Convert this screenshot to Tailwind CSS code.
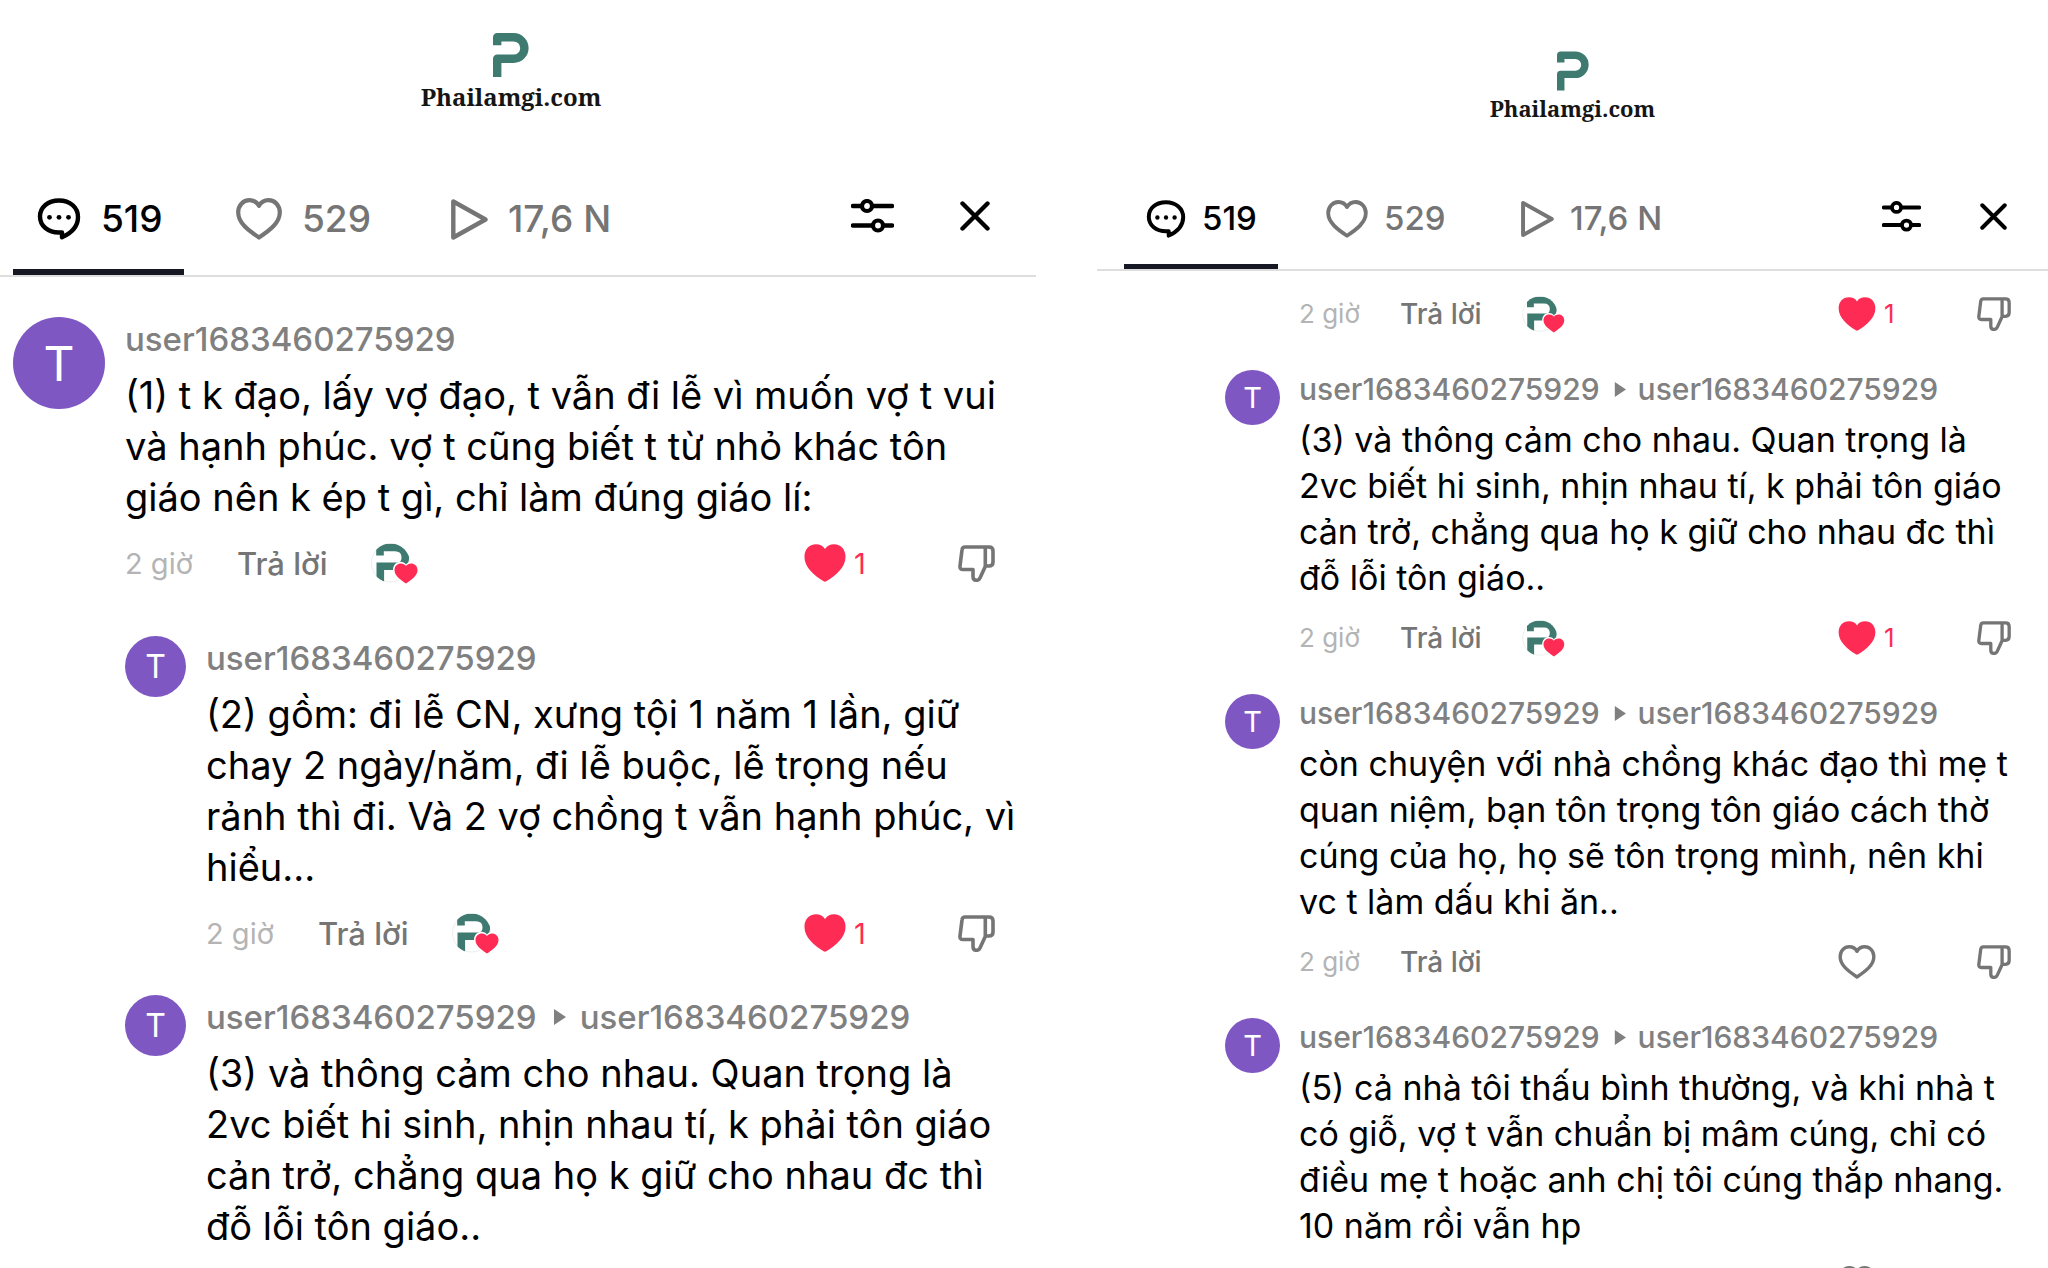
<!DOCTYPE html>
<html lang="vi">
<head>
  <meta charset="UTF-8" />
  <meta name="viewport" content="width=device-width, initial-scale=1.0" />
  <title>Phailamgi.com - Bình luận</title>
  <script src="https://cdn.jsdelivr.net/npm/@tailwindcss/browser@4"></script>
</head>
<body class="bg-white text-black font-[family-name:Inter,sans-serif] font-medium h-screen overflow-hidden">

  <!-- Icons -->
  <svg class="absolute size-0" aria-hidden="true">
    <symbol id="logo" viewBox="0 0 36 44">
      <path d="M4.2 12.3V4.2H20.6A10.8 10.8 0 0 1 20.6 25.8H4.2V44" fill="none" stroke="#3f7a70" stroke-width="8.4" stroke-linejoin="round" />
    </symbol>
    <symbol id="comment" viewBox="0 0 44 42">
      <path d="M25 34.5H22C11 34.5 3 28 3 18.5S11 2.5 22 2.5S41 9.5 41 19C41 28 34.5 35 25 39.3Z" fill="none" stroke="currentColor" stroke-width="4.4" stroke-linejoin="round" />
      <circle cx="12.5" cy="19.3" r="2.4" fill="currentColor" />
      <circle cx="22" cy="19.3" r="2.4" fill="currentColor" />
      <circle cx="31.5" cy="19.3" r="2.4" fill="currentColor" />
    </symbol>
    <symbol id="heart" viewBox="0 0 46 42">
      <path d="M23 7.8C21 4.2 17.5 2.2 13.5 2.2C7 2.2 2.2 7.5 2.2 14.5C2.2 25 12.5 32.5 23 39.5C33.5 32.5 43.8 25 43.8 14.5C43.8 7.5 39 2.2 32.5 2.2C28.5 2.2 25 4.2 23 7.8Z" fill="none" stroke="currentColor" stroke-width="4.2" stroke-linejoin="round" />
    </symbol>
    <symbol id="heart-full" viewBox="0 0 46 42">
      <path d="M23 5.5C21 2 17.5 .3 13 .3C5.5 .3 .3 6 .3 14C.3 26 11 34.5 21.5 41.2Q23 42 24.5 41.2C35 34.5 45.7 26 45.7 14C45.7 6 40.5 .3 33 .3C28.5 .3 25 2 23 5.5Z" fill="currentColor" />
    </symbol>
    <symbol id="play" viewBox="0 0 37 41">
      <path d="M2.3 2.5V38.5L34.5 20.5Z" fill="none" stroke="currentColor" stroke-width="4.4" stroke-linejoin="round" />
    </symbol>
    <symbol id="filter" viewBox="0 0 43 34">
      <path d="M2 7H10M22 7H41M2 26.5H21M33 26.5H41" fill="none" stroke="currentColor" stroke-width="4.4" stroke-linecap="round" />
      <circle cx="16" cy="7" r="5" fill="none" stroke="currentColor" stroke-width="4.2" />
      <circle cx="27" cy="26.5" r="5" fill="none" stroke="currentColor" stroke-width="4.2" />
    </symbol>
    <symbol id="close" viewBox="0 0 30 30">
      <path d="M2.5 2.5L27.5 27.5M27.5 2.5L2.5 27.5" fill="none" stroke="currentColor" stroke-width="4.4" stroke-linecap="round" />
    </symbol>
    <symbol id="dislike" viewBox="0 0 37 37">
      <path d="M7 2H31Q35 2 35 6V17Q35 21 31 21H27.5L22 33Q21 35.3 18.5 35.3Q15 35.3 15 31.5V24.5H5Q1.6 24.5 2 21L4 5Q4.3 2 7 2ZM27.3 2V21" fill="none" stroke="currentColor" stroke-width="3.6" stroke-linejoin="round" />
    </symbol>
    <clipPath id="round"><circle cx="19.5" cy="20" r="19.5" /></clipPath>
    <symbol id="liked-by" viewBox="0 0 47 41">
      <circle cx="19.5" cy="20" r="19" fill="#fff" stroke="#e8eeed" stroke-width="1" />
      <path d="M9 12.5V4.5H24C31 4.5 34.3 9 34.3 14.5C34.3 20 31 23.3 26 23.3H9.3V41" fill="none" stroke="#3f7a70" stroke-width="7.6" clip-path="url(#round)" />
      <path d="M35 21.5C31.5 16.5 22 18.5 22 27C22 33.5 30 38 35 41.5C40 38 48 33.5 48 27C48 18.5 38.5 16.5 35 21.5Z" fill="#fff" />
      <path d="M35 23C32 18.5 23.5 20 23.5 27C23.5 33 30 37 35 40.5C40 37 46.5 33 46.5 27C46.5 20 38 18.5 35 23Z" fill="#fe2c55" />
    </symbol>
    <symbol id="arrow" viewBox="0 0 15 16">
      <path d="M3 0L15 8L3 16Z" fill="currentColor" />
    </symbol>
  </svg>

  <main class="grid grid-cols-[minmax(0,1036fr)_minmax(0,951fr)] gap-[61px]">

    <!-- Left screen -->
    <section>
      <header class="border-b-2 border-[#dedede] pt-[33px]">
        <a href="#" class="flex flex-col items-center gap-1 pr-[14px] text-[#151515]">
          <svg class="w-9 h-11"><use href="#logo" /></svg>
          <span class="font-[family-name:Noto_Serif,Liberation_Serif,serif] font-bold text-[24px] leading-8">Phailamgi.com</span>
        </a>
        <nav class="mt-[50px] h-[112px] pl-[13px] pr-[46px] flex items-center text-[37px] text-[#757575]">
          <button class="h-full w-[171px] px-6 pt-[6px] flex items-center gap-5 border-b-6 border-[#161823] text-black">
            <svg class="w-11 h-[42px] shrink-0"><use href="#comment" /></svg>519
          </button>
          <button class="h-full w-[215px] ml-7 px-6 flex items-center gap-5">
            <svg class="w-[46px] h-[42px] shrink-0"><use href="#heart" /></svg>529
          </button>
          <button class="h-full flex items-center gap-5 px-6 whitespace-nowrap">
            <svg class="w-[37px] h-[41px] shrink-0"><use href="#play" /></svg>17,6 N
          </button>
          <div class="ml-auto flex items-center gap-[66px] pb-[6px] text-black">
            <button aria-label="Lọc"><svg class="w-[43px] h-[34px]"><use href="#filter" /></svg></button>
            <button aria-label="Đóng"><svg class="w-[30px] h-[30px]"><use href="#close" /></svg></button>
          </div>
        </nav>
      </header>

      <div class="pt-10 pl-[13px] pr-[41px] text-[38px] leading-[51px] whitespace-nowrap">
        <article class="flex gap-5 mb-[53px]">
          <div class="size-[92px] shrink-0 rounded-full bg-[#7e57c2] text-white text-[48px] font-normal flex items-center justify-center">T</div>
          <div class="flex-1 min-w-0 pt-[2px]">
            <a href="#" class="block text-[33px] leading-10 text-[#808080]">user1683460275929</a>
            <p class="mt-[11px] font-normal">(1) t k đạo, lấy vợ đạo, t vẫn đi lễ vì muốn vợ t vui<br>và hạnh phúc. vợ t cũng biết t từ nhỏ khác tôn<br>giáo nên k ép t gì, chỉ làm đúng giáo lí:</p>
            <div class="mt-5 h-10 flex items-center gap-11 text-[29px] text-[#757575]">
              <span class="font-normal text-[#b4b4b4]">2 giờ</span>
              <button class="text-[31px]">Trả lời</button>
              <svg class="w-[47px] h-[41px]"><use href="#liked-by" /></svg>
              <div class="ml-auto w-[191px] flex items-center justify-between">
                <button class="flex items-center gap-2 text-[#fe2c55] font-normal"><svg class="w-[42px] h-[38px]"><use href="#heart-full" /></svg>1</button>
                <button aria-label="Không thích"><svg class="size-[37px]"><use href="#dislike" /></svg></button>
              </div>
            </div>
          </div>
        </article>

        <article class="flex gap-5 ml-28 mb-[42px]">
          <div class="size-[61px] shrink-0 rounded-full bg-[#7e57c2] text-white text-[32px] font-normal flex items-center justify-center">T</div>
          <div class="flex-1 min-w-0 pt-[2px]">
            <a href="#" class="block text-[33px] leading-10 text-[#808080]">user1683460275929</a>
            <p class="mt-[11px] font-normal">(2) gồm: đi lễ CN, xưng tội 1 năm 1 lần, giữ<br>chay 2 ngày/năm, đi lễ buộc, lễ trọng nếu<br>rảnh thì đi. Và 2 vợ chồng t vẫn hạnh phúc, vì<br>hiểu...</p>
            <div class="mt-5 h-10 flex items-center gap-11 text-[29px] text-[#757575]">
              <span class="font-normal text-[#b4b4b4]">2 giờ</span>
              <button class="text-[31px]">Trả lời</button>
              <svg class="w-[47px] h-[41px]"><use href="#liked-by" /></svg>
              <div class="ml-auto w-[191px] flex items-center justify-between">
                <button class="flex items-center gap-2 text-[#fe2c55] font-normal"><svg class="w-[42px] h-[38px]"><use href="#heart-full" /></svg>1</button>
                <button aria-label="Không thích"><svg class="size-[37px]"><use href="#dislike" /></svg></button>
              </div>
            </div>
          </div>
        </article>

        <article class="flex gap-5 ml-28">
          <div class="size-[61px] shrink-0 rounded-full bg-[#7e57c2] text-white text-[32px] font-normal flex items-center justify-center">T</div>
          <div class="flex-1 min-w-0 pt-[2px]">
            <div class="flex items-center gap-[14px] text-[33px] leading-10 text-[#808080]">
              <a href="#">user1683460275929</a>
              <svg class="w-[15px] h-4"><use href="#arrow" /></svg>
              <a href="#">user1683460275929</a>
            </div>
            <p class="mt-[11px] font-normal">(3) và thông cảm cho nhau. Quan trọng là<br>2vc biết hi sinh, nhịn nhau tí, k phải tôn giáo<br>cản trở, chẳng qua họ k giữ cho nhau đc thì<br>đỗ lỗi tôn giáo..</p>
          </div>
        </article>
      </div>
    </section>

    <!-- Right screen -->
    <section>
      <header class="border-b-2 border-[#dedede] pt-[51px]">
        <a href="#" class="flex flex-col items-center gap-[3px] text-[#151515]">
          <svg class="w-8 h-10"><use href="#logo" /></svg>
          <span class="font-[family-name:Noto_Serif,Liberation_Serif,serif] font-bold text-[22px] leading-7">Phailamgi.com</span>
        </a>
        <nav class="mt-[47px] h-[100px] pl-[27px] pr-[41px] flex items-center text-[33px] text-[#757575]">
          <button class="h-full w-[154px] px-[22px] pt-[5px] flex items-center gap-4 border-b-5 border-[#161823] text-black">
            <svg class="w-10 h-[38px] shrink-0"><use href="#comment" /></svg>519
          </button>
          <button class="h-full w-[195px] ml-[26px] px-[22px] flex items-center gap-4">
            <svg class="w-[42px] h-[38px] shrink-0"><use href="#heart" /></svg>529
          </button>
          <button class="h-full flex items-center gap-4 px-[22px] whitespace-nowrap">
            <svg class="w-[33px] h-[38px] shrink-0"><use href="#play" /></svg>17,6 N
          </button>
          <div class="ml-auto flex items-center gap-[59px] pb-[6px] text-black">
            <button aria-label="Lọc"><svg class="w-[39px] h-[31px]"><use href="#filter" /></svg></button>
            <button aria-label="Đóng"><svg class="w-[27px] h-[27px]"><use href="#close" /></svg></button>
          </div>
        </nav>
      </header>

      <div class="pt-[25px] pl-32 pr-[37px] text-[34px] leading-[46px] whitespace-nowrap">
        <div class="ml-[74px] mb-[38px] h-9 flex items-center gap-10 text-[26px] text-[#757575]">
          <span class="font-normal text-[#b4b4b4]">2 giờ</span>
          <button class="text-[28px]">Trả lời</button>
          <svg class="w-[43px] h-[37px]"><use href="#liked-by" /></svg>
          <div class="ml-auto w-[173px] flex items-center justify-between">
            <button class="flex items-center gap-2 text-[#fe2c55] font-normal"><svg class="w-[38px] h-[34px]"><use href="#heart-full" /></svg>1</button>
            <button aria-label="Không thích"><svg class="size-[34px]"><use href="#dislike" /></svg></button>
          </div>
        </div>

        <article class="flex gap-[19px] mb-[38px]">
          <div class="size-[55px] shrink-0 rounded-full bg-[#7e57c2] text-white text-[29px] font-normal flex items-center justify-center">T</div>
          <div class="flex-1 min-w-0 pt-px">
            <div class="flex items-center gap-3 text-[30px] leading-9 text-[#808080]">
              <a href="#">user1683460275929</a>
              <svg class="w-[14px] h-[15px]"><use href="#arrow" /></svg>
              <a href="#">user1683460275929</a>
            </div>
            <p class="mt-[10px] font-normal">(3) và thông cảm cho nhau. Quan trọng là<br>2vc biết hi sinh, nhịn nhau tí, k phải tôn giáo<br>cản trở, chẳng qua họ k giữ cho nhau đc thì<br>đỗ lỗi tôn giáo..</p>
            <div class="mt-[19px] h-9 flex items-center gap-10 text-[26px] text-[#757575]">
              <span class="font-normal text-[#b4b4b4]">2 giờ</span>
              <button class="text-[28px]">Trả lời</button>
              <svg class="w-[43px] h-[37px]"><use href="#liked-by" /></svg>
              <div class="ml-auto w-[173px] flex items-center justify-between">
                <button class="flex items-center gap-2 text-[#fe2c55] font-normal"><svg class="w-[38px] h-[34px]"><use href="#heart-full" /></svg>1</button>
                <button aria-label="Không thích"><svg class="size-[34px]"><use href="#dislike" /></svg></button>
              </div>
            </div>
          </div>
        </article>

        <article class="flex gap-[19px] mb-[38px]">
          <div class="size-[55px] shrink-0 rounded-full bg-[#7e57c2] text-white text-[29px] font-normal flex items-center justify-center">T</div>
          <div class="flex-1 min-w-0 pt-px">
            <div class="flex items-center gap-3 text-[30px] leading-9 text-[#808080]">
              <a href="#">user1683460275929</a>
              <svg class="w-[14px] h-[15px]"><use href="#arrow" /></svg>
              <a href="#">user1683460275929</a>
            </div>
            <p class="mt-[10px] font-normal">còn chuyện với nhà chồng khác đạo thì mẹ t<br>quan niệm, bạn tôn trọng tôn giáo cách thờ<br>cúng của họ, họ sẽ tôn trọng mình, nên khi<br>vc t làm dấu khi ăn..</p>
            <div class="mt-[19px] h-9 flex items-center gap-10 text-[26px] text-[#757575]">
              <span class="font-normal text-[#b4b4b4]">2 giờ</span>
              <button class="text-[28px]">Trả lời</button>
              <div class="ml-auto w-[173px] flex items-center justify-between">
                <button aria-label="Thích"><svg class="w-[38px] h-[34px]"><use href="#heart" /></svg></button>
                <button aria-label="Không thích"><svg class="size-[34px]"><use href="#dislike" /></svg></button>
              </div>
            </div>
          </div>
        </article>

        <article class="flex gap-[19px]">
          <div class="size-[55px] shrink-0 rounded-full bg-[#7e57c2] text-white text-[29px] font-normal flex items-center justify-center">T</div>
          <div class="flex-1 min-w-0 pt-px">
            <div class="flex items-center gap-3 text-[30px] leading-9 text-[#808080]">
              <a href="#">user1683460275929</a>
              <svg class="w-[14px] h-[15px]"><use href="#arrow" /></svg>
              <a href="#">user1683460275929</a>
            </div>
            <p class="mt-[10px] font-normal">(5) cả nhà tôi thấu bình thường, và khi nhà t<br>có giỗ, vợ t vẫn chuẩn bị mâm cúng, chỉ có<br>điều mẹ t hoặc anh chị tôi cúng thắp nhang.<br>10 năm rồi vẫn hp</p>
            <div class="mt-[17px] ml-auto w-[173px]">
              <button aria-label="Thích" class="block text-[#757575]"><svg class="w-[38px] h-[34px]"><use href="#heart" /></svg></button>
            </div>
          </div>
        </article>
      </div>
    </section>

  </main>
</body>
</html>
